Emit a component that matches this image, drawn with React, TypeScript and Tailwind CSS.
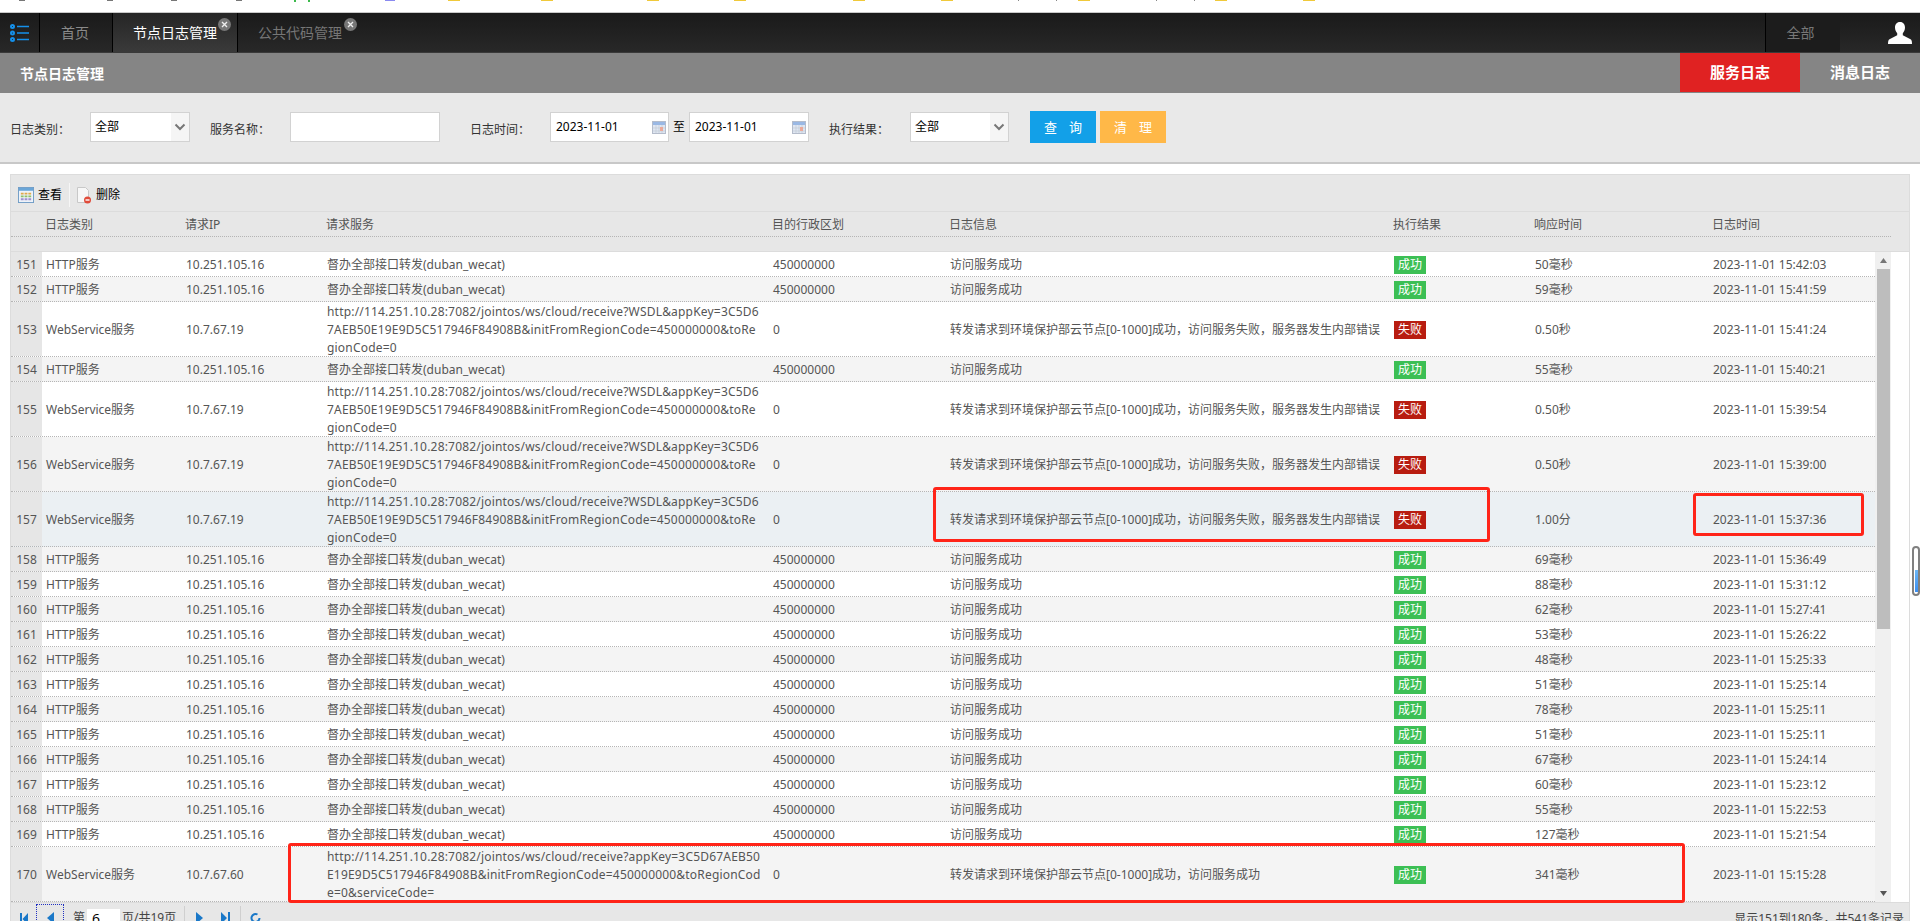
import React from "react";

type Row = { n: number; kind: "h" | "w" | "x"; ok: boolean; ms: string; t: string; hover?: boolean };

const font = "font-['Noto_Sans','Noto_Sans_CJK_SC',sans-serif]";

const rows: Row[] = [
  { n: 151, kind: "h", ok: true, ms: "50毫秒", t: "15:42:03" },
  { n: 152, kind: "h", ok: true, ms: "59毫秒", t: "15:41:59" },
  { n: 153, kind: "w", ok: false, ms: "0.50秒", t: "15:41:24" },
  { n: 154, kind: "h", ok: true, ms: "55毫秒", t: "15:40:21" },
  { n: 155, kind: "w", ok: false, ms: "0.50秒", t: "15:39:54" },
  { n: 156, kind: "w", ok: false, ms: "0.50秒", t: "15:39:00" },
  { n: 157, kind: "w", ok: false, ms: "1.00分", t: "15:37:36", hover: true },
  { n: 158, kind: "h", ok: true, ms: "69毫秒", t: "15:36:49" },
  { n: 159, kind: "h", ok: true, ms: "88毫秒", t: "15:31:12" },
  { n: 160, kind: "h", ok: true, ms: "62毫秒", t: "15:27:41" },
  { n: 161, kind: "h", ok: true, ms: "53毫秒", t: "15:26:22" },
  { n: 162, kind: "h", ok: true, ms: "48毫秒", t: "15:25:33" },
  { n: 163, kind: "h", ok: true, ms: "51毫秒", t: "15:25:14" },
  { n: 164, kind: "h", ok: true, ms: "78毫秒", t: "15:25:11" },
  { n: 165, kind: "h", ok: true, ms: "51毫秒", t: "15:25:11" },
  { n: 166, kind: "h", ok: true, ms: "67毫秒", t: "15:24:14" },
  { n: 167, kind: "h", ok: true, ms: "60毫秒", t: "15:23:12" },
  { n: 168, kind: "h", ok: true, ms: "55毫秒", t: "15:22:53" },
  { n: 169, kind: "h", ok: true, ms: "127毫秒", t: "15:21:54" },
  { n: 170, kind: "x", ok: true, ms: "341毫秒", t: "15:15:28" },
];

const wsLines = [
  "http://114.251.10.28:7082/jointos/ws/cloud/receive?WSDL&appKey=3C5D6",
  "7AEB50E19E9D5C517946F84908B&initFromRegionCode=450000000&toRe",
  "gionCode=0",
];
const xLines = [
  "http://114.251.10.28:7082/jointos/ws/cloud/receive?appKey=3C5D67AEB50",
  "E19E9D5C517946F84908B&initFromRegionCode=450000000&toRegionCod",
  "e=0&serviceCode=",
];

function Calendar() {
  return (
    <svg width="14" height="13" viewBox="0 0 14 13" className="shrink-0">
      <rect x="0.5" y="0.5" width="13" height="12" fill="#dfe6f2" stroke="#b4bccb" />
      <rect x="1" y="1" width="12" height="3" fill="#9ab8e4" />
      <path d="M1 7h12M1 10h12M4 4v8M7 4v8M10 4v8" stroke="#c3cad6" strokeWidth="0.7" />
      <rect x="8" y="6" width="3" height="4" fill="#eba999" />
    </svg>
  );
}

function Chevron() {
  return (
    <svg width="12" height="8" viewBox="0 0 12 8">
      <path d="M1.5 1.5 6 6l4.5-4.5" fill="none" stroke="#777" strokeWidth="2" />
    </svg>
  );
}

function Select({ w }: { w: string }) {
  return (
    <div className={`flex h-[30px] border border-[#d2d2d2] bg-white ${w}`}>
      <span className="flex-1 pl-[4px] pt-[5px] text-[12px] text-black">全部</span>
      <span className="flex w-[18px] items-center justify-center bg-[#f5f5f5]">
        <Chevron />
      </span>
    </div>
  );
}

function DateBox({ w }: { w: string }) {
  return (
    <div className={`flex h-[30px] items-center justify-between border border-[#d2d2d2] bg-white pl-[5px] pr-[2px] text-[12px] text-black ${w}`}>
      <span className="-mt-[1px]">2023-11-01</span>
      <Calendar />
    </div>
  );
}

function Close({ className }: { className: string }) {
  return (
    <span className={`absolute flex h-[13px] w-[13px] items-center justify-center rounded-full bg-[#777] ${className}`}>
      <svg width="7" height="7" viewBox="0 0 7 7">
        <path d="M1 1l5 5M6 1L1 6" stroke="#eee" strokeWidth="1.4" />
      </svg>
    </span>
  );
}

function Badge({ ok }: { ok: boolean }) {
  return (
    <span className={`flex h-[18px] w-[32px] items-center justify-center text-[12px] leading-none text-white ${ok ? "bg-[#3cbf54]" : "bg-[#b81c10]"}`}>
      {ok ? "成功" : "失败"}
    </span>
  );
}

function DataRow({ r }: { r: Row }) {
  const tall = r.kind !== "h";
  const bg = r.hover ? "bg-[#ebf0f3]" : r.n % 2 === 0 ? "bg-[#f4f4f4]" : "bg-white";
  const lines = r.kind === "w" ? wsLines : xLines;
  const ip = r.kind === "h" ? "10.251.105.16" : r.kind === "w" ? "10.7.67.19" : "10.7.67.60";
  return (
    <div className={`flex border-b border-dotted border-[#b5b5b5] ${tall ? "h-[55px]" : "h-[25px]"} ${bg}`}>
      <div className="flex w-[31px] shrink-0 items-center justify-center bg-[#e6e6e6] pt-[2px]">{r.n}</div>
      <div className="flex flex-1 items-center pt-[2px]">
        <div className="w-[144px] shrink-0 pl-[4px]">{r.kind === "h" ? "HTTP服务" : "WebService服务"}</div>
        <div className="w-[141px] shrink-0">{ip}</div>
        <div className="w-[446px] shrink-0 whitespace-nowrap">
          {r.kind === "h" ? (
            "督办全部接口转发(duban_wecat)"
          ) : (
            <div className="-mt-[1px] tracking-[0.19px]">
              {lines.map((l) => (
                <div key={l} className="h-[18px]">{l}</div>
              ))}
            </div>
          )}
        </div>
        <div className="w-[177px] shrink-0">{r.kind === "h" ? "450000000" : "0"}</div>
        <div className="w-[444px] shrink-0 whitespace-nowrap">
          {r.kind === "h"
            ? "访问服务成功"
            : r.kind === "w"
              ? "转发请求到环境保护部云节点[0-1000]成功，访问服务失败，服务器发生内部错误"
              : "转发请求到环境保护部云节点[0-1000]成功，访问服务成功"}
        </div>
        <div className="w-[141px] shrink-0"><Badge ok={r.ok} /></div>
        <div className="w-[178px] shrink-0">{r.ms}</div>
        <div className="whitespace-nowrap">2023-11-01 {r.t}</div>
      </div>
    </div>
  );
}

function HeadCell({ w, children }: { w: string; children: React.ReactNode }) {
  return <div className={`shrink-0 ${w}`}>{children}</div>;
}

function Mark({ c }: { c: string }) {
  return <span className={`h-[1px] shrink-0 ${c}`} />;
}

export default function App() {
  return (
    <div className={`relative h-[921px] w-[1920px] overflow-hidden bg-white text-[12px] text-[#555] ${font}`}>
      {/* clipped browser bookmark icons */}
      <div className="flex h-[12px] items-start bg-white">
        <Mark c="ml-[19px] w-[6px] bg-[#777]" />
        <Mark c="ml-[82px] w-[6px] bg-[#777]" />
        <Mark c="ml-[58px] w-[6px] bg-[#777]" />
        <Mark c="ml-[59px] w-[6px] bg-[#777]" />
        <span className="ml-[52px] h-[2px] w-[16px] shrink-0 border-x-2 border-[#3cba4c]" />
        <Mark c="ml-[75px] w-[10px] bg-[#8a8af0]" />
        <Mark c="ml-[53px] w-[12px] bg-[#f0c93a]" />
        <Mark c="ml-[81px] w-[12px] bg-[#f0c93a]" />
        <Mark c="ml-[94px] w-[12px] bg-[#f0c93a]" />
        <Mark c="ml-[75px] w-[12px] bg-[#f0c93a]" />
        <Mark c="ml-[107px] w-[12px] bg-[#f0c93a]" />
        <Mark c="ml-[76px] w-[12px] bg-[#f0c93a]" />
        <Mark c="ml-[65px] w-[1px] bg-[#888]" />
        <Mark c="ml-[37px] w-[1px] bg-[#888]" />
        <Mark c="ml-[21px] w-[12px] bg-[#f0c93a]" />
        <Mark c="ml-[66px] w-[1px] bg-[#888]" />
        <Mark c="ml-[37px] w-[1px] bg-[#888]" />
        <Mark c="ml-[20px] w-[12px] bg-[#f0c93a]" />
        <Mark c="ml-[76px] w-[12px] bg-[#f0c93a]" />
      </div>

      {/* tab bar */}
      <div className="flex h-[41px] border-y border-t-[#c9c9c9] border-b-[#3a3a3a] bg-gradient-to-b from-[#1a1a1a] to-[#282828] text-[14px]">
        <div className="flex w-[40px] shrink-0 items-center justify-center border-r border-black">
          <svg width="19" height="18" viewBox="0 0 19 18">
            <g fill="none" stroke="#1590ea">
              <g strokeWidth="2">
                <circle cx="2.500" cy="2.500" r="1.500" />
                <circle cx="2.500" cy="9" r="1.500" />
                <circle cx="2.500" cy="15.500" r="1.500" />
              </g>
              <path d="M7 2.500h12M7 9h12M7 15.500h12" strokeWidth="1.500" />
            </g>
          </svg>
        </div>
        <div className="flex w-[73px] shrink-0 items-center justify-center border-r border-black pr-[2px] text-[#8a8a8a]">首页</div>
        <div className="relative flex w-[125px] shrink-0 items-center border-r border-black bg-gradient-to-b from-[#262626] to-[#3a3a3a] pl-[20px] text-white">
          节点日志管理
          <Close className="left-[105px] top-[5px]" />
        </div>
        <div className="relative flex w-[125px] shrink-0 items-center pl-[20px] text-[#767676]">
          公共代码管理
          <Close className="left-[106px] top-[5px]" />
        </div>
        <div className="flex-1" />
        <div className="flex w-[75px] shrink-0 items-center justify-center border-l border-black bg-[#1c1c1c] pr-[5px] text-[#777]">全部</div>
        <div className="flex w-[80px] shrink-0 items-center justify-end pr-[8px]">
          <svg width="24" height="22" viewBox="0 0 24 22">
            <path d="M12 0c-3.400 0-5 2.600-5 5.600 0 2.400 1 4.400 2.200 5.600v2L1.500 17.200C.5 17.800 0 18.800 0 22h24c0-3.200-.5-4.200-1.500-4.800l-7.700-4v-2c1.200-1.200 2.200-3.200 2.200-5.600C17 2.600 15.400 0 12 0z" fill="#fff" />
          </svg>
        </div>
      </div>

      {/* title bar */}
      <div className="flex h-[40px] bg-[#858585] text-[14px] font-bold text-white">
        <div className="flex flex-1 items-center pl-[20px]">节点日志管理</div>
        <div className="mb-[1px] flex w-[120px] items-center justify-center bg-[#e02222] text-[15px]">服务日志</div>
        <div className="mb-[1px] flex w-[120px] items-center justify-center text-[15px]">消息日志</div>
      </div>

      {/* filter bar */}
      <div className="flex h-[71px] items-start border-b-2 border-[#c8c8c8] bg-[#e9e9e9] pt-[19px] text-[#333]">
        <span className="ml-[10px] mt-[9px] w-[80px] shrink-0">日志类别：</span>
        <Select w="w-[100px]" />
        <span className="ml-[20px] mt-[9px] w-[80px] shrink-0">服务名称：</span>
        <div className="h-[30px] w-[150px] border border-[#d2d2d2] bg-white" />
        <span className="ml-[30px] mt-[9px] w-[80px] shrink-0">日志时间：</span>
        <DateBox w="w-[119px]" />
        <span className="ml-[4px] mt-[6px] w-[16px] shrink-0 text-black">至</span>
        <DateBox w="w-[120px]" />
        <span className="ml-[20px] mt-[9px] w-[81px] shrink-0">执行结果：</span>
        <Select w="w-[99px]" />
        <button className="-mt-[1px] ml-[21px] flex h-[32px] w-[66px] items-center justify-center gap-[12px] bg-[#12a0e8] pt-[2px] text-[13px] text-white">
          <span>查</span><span>询</span>
        </button>
        <button className="-mt-[1px] ml-[4px] flex h-[32px] w-[66px] items-center justify-center gap-[12px] bg-[#ffb848] pt-[2px] text-[13px] text-white">
          <span>清</span><span>理</span>
        </button>
      </div>

      {/* grid panel */}
      <div className="mx-[10px] mt-[10px] flex h-[747px] w-[1900px] flex-col border border-b-0 border-[#dcdcdc] bg-white">
        <div className="flex h-[37px] shrink-0 items-center border-b border-[#dcdcdc] bg-[#e7e7e7] pl-[7px] pt-[4px] text-black">
          <svg width="16" height="16" viewBox="0 0 17 17" className="shrink-0">
            <rect x="0.5" y="0.5" width="16" height="16" fill="#eef3f9" stroke="#6f9cc5" />
            <rect x="1" y="1" width="15" height="3" fill="#6aa6d8" />
            <path d="M3 6h3v2H3zM7 6h3v2H7zM11 6h3v2h-3z" fill="#e0a84a" />
            <path d="M3 9h3v2H3zM7 9h3v2H7zM11 9h3v2h-3z" fill="#8fbf6a" />
            <path d="M3 12h3v2H3zM7 12h3v2H7zM11 12h3v2h-3z" fill="#a08fd0" />
          </svg>
          <span className="ml-[4px]">查看</span>
          <span className="ml-[7px] h-[24px] w-px bg-[#f6f6f6]" />
          <svg width="16" height="17" viewBox="0 0 16 17" className="ml-[6px] shrink-0">
            <path d="M1.500.5h8l3 3v12h-11z" fill="#f7f7f7" stroke="#c8c8c8" />
            <circle cx="11.500" cy="13" r="3.500" fill="#e04b3a" />
            <rect x="9.500" y="12.300" width="4" height="1.400" fill="#fff" />
          </svg>
          <span className="ml-[4px]">删除</span>
        </div>

        <div className="h-[40px] shrink-0 border-b border-[#dcdcdc] bg-[#e7e7e7]">
          <div className="flex h-[25px] w-[1880px] items-center border-b border-dotted border-[#b5b5b5] pl-[34px] pt-[2px] text-[#555]">
            <HeadCell w="w-[140px]">日志类别</HeadCell>
            <HeadCell w="w-[141px]">请求IP</HeadCell>
            <HeadCell w="w-[446px]">请求服务</HeadCell>
            <HeadCell w="w-[177px]">目的行政区划</HeadCell>
            <HeadCell w="w-[444px]">日志信息</HeadCell>
            <HeadCell w="w-[141px]">执行结果</HeadCell>
            <HeadCell w="w-[178px]">响应时间</HeadCell>
            <HeadCell w="w-[100px]">日志时间</HeadCell>
          </div>
        </div>

        <div className="flex min-h-0 flex-1">
          <div className="w-[1864px] shrink-0 overflow-hidden">
            {rows.map((r) => <DataRow key={r.n} r={r} />)}
          </div>
          <div className="flex h-full w-[16px] shrink-0 flex-col items-center bg-[#f0f0f0]">
            <div className="flex h-[17px] items-center justify-center">
              <svg width="7" height="5" viewBox="0 0 7 5"><path d="M3.500 0 7 5H0z" fill="#777" /></svg>
            </div>
            <div className="h-[360px] w-[13px] bg-[#bdbdbd]" />
            <div className="flex-1" />
            <div className="mb-[6px] flex items-center justify-center">
              <svg width="7" height="5" viewBox="0 0 7 5"><path d="M0 0h7L3.500 5z" fill="#555" /></svg>
            </div>
          </div>
        </div>

        <div className="flex h-[19px] shrink-0 items-start border-t border-[#dcdcdc] bg-[#e7e7e7] text-[#444]">
          <svg width="8" height="12" viewBox="0 0 8 12" className="ml-[9px] mt-[10px] shrink-0"><path d="M0 0h2v12H0zM8 0v12L2.500 6z" fill="#1a78c8" /></svg>
          <span className="ml-[8px] mt-[1px] flex h-[24px] w-[28px] shrink-0 items-start justify-center border border-dotted border-[#2030c0] pt-[7px]">
            <svg width="7" height="12" viewBox="0 0 7 12"><path d="M7 0v12L0 6z" fill="#1a78c8" /></svg>
          </span>
          <span className="ml-[9px] mt-[6px]">第</span>
          <span className="ml-[2px] mt-[6px] h-[20px] w-[33px] bg-white pl-[5px] text-[14px] leading-[20px] text-black">6</span>
          <span className="ml-[2px] mt-[6px] whitespace-nowrap">页/共19页</span>
          <span className="ml-[8px] mt-[3px] h-[20px] w-px bg-[#cfcfcf]" />
          <svg width="7" height="12" viewBox="0 0 7 12" className="ml-[11px] mt-[9px]"><path d="M0 0v12l7-6z" fill="#1a78c8" /></svg>
          <svg width="9" height="12" viewBox="0 0 9 12" className="ml-[18px] mt-[9px]"><path d="M0 0v12l6-6zM7 0h2v12H7z" fill="#1a78c8" /></svg>
          <span className="ml-[10px] mt-[3px] h-[20px] w-px bg-[#cfcfcf]" />
          <svg width="11" height="12" viewBox="0 0 11 12" className="ml-[9px] mt-[9px]"><path d="M9.500 6a4 4 0 1 1-2-3.500" fill="none" stroke="#1a78c8" strokeWidth="2" /></svg>
          <span className="ml-auto mr-[5px] mt-[7px] whitespace-nowrap">显示151到180条，共541条记录</span>
        </div>
      </div>

      {/* hand-drawn annotation boxes and the page scroll overlay */}
      <div className="absolute left-[933px] top-[487px] h-[55px] w-[557px] rounded-[3px] border-[3px] border-[#ff2418]" />
      <div className="absolute left-[1693px] top-[493px] h-[43px] w-[171px] rounded-[3px] border-[3px] border-[#ff2418]" />
      <div className="absolute left-[288px] top-[843px] h-[60px] w-[1397px] rounded-[3px] border-[3px] border-[#ff2418]" />
      <div className="absolute left-[1912px] top-[546px] h-[50px] w-[8px] overflow-hidden rounded-[4px] border-2 border-[#808080] bg-white">
        <div className="mx-auto mt-[22px] h-[22px] w-[3px] bg-gradient-to-b from-[#6bb6f5] to-[#3b8ef0]" />
      </div>
    </div>
  );
}
